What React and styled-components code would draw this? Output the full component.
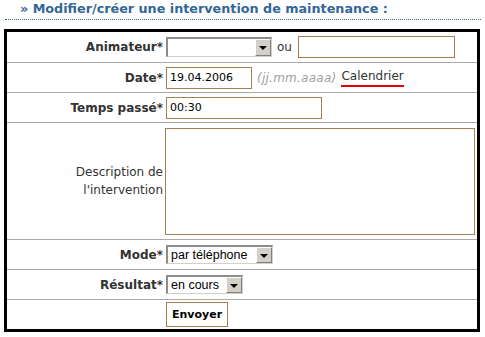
import React from 'react';
import styled, { createGlobalStyle } from 'styled-components';

const GlobalStyle = createGlobalStyle`
  html, body {
    margin: 0;
    padding: 0;
    background: #fff;
  }
  body {
    font-family: "DejaVu Sans", Verdana, sans-serif;
    color: #333;
  }
`;

const Page = styled.div`
  width: 485px;
  height: 337px;
  padding: 0 4px 0 4px;
  box-sizing: border-box;
`;

const Title = styled.h2`
  margin: 0 0 0 1px;
  padding: 2px 0 3px 15px;
  font-size: 12.75px;
  line-height: 14px;
  font-weight: bold;
  color: #336699;
  border-bottom: 1px dotted #336699;
`;

const Form = styled.form`
  margin-top: 9px;
  width: 476px;
  box-sizing: border-box;
  border: 3px solid #000;
`;

const Row = styled.div`
  display: grid;
  grid-template-columns: 159px 1fr;
  height: ${(p) => p.$h}px;
  border-bottom: ${(p) => (p.$last ? 'none' : '1px solid #aaa')};
`;

const Label = styled.label`
  display: flex;
  align-items: center;
  justify-content: flex-end;
  padding-right: 3px;
  font-size: 12px;
  font-weight: ${(p) => (p.$plain ? 'normal' : 'bold')};
  line-height: 18px;
  text-align: right;
  color: #333;
`;

const Field = styled.div`
  display: flex;
  align-items: center;
  font-size: 12px;
  color: #333;
`;

const TextInput = styled.input`
  box-sizing: border-box;
  width: ${(p) => p.$w}px;
  height: 22px;
  margin: 0;
  padding: 0 3px;
  border: 1px solid #a58052;
  background: #fff;
  font-family: "DejaVu Sans", Verdana, sans-serif;
  font-size: 11px;
  color: #000;
  outline: none;
`;

const TextArea = styled.textarea`
  box-sizing: border-box;
  width: 310px;
  height: 107px;
  margin: 0 0 0 -1px;
  border: 1px solid #a58052;
  resize: none;
  outline: none;
`;

const SelectWrap = styled.span`
  display: inline-flex;
  align-items: stretch;
  box-sizing: border-box;
  width: ${(p) => p.$w}px;
  height: ${(p) => p.$h || 19}px;
  border-style: solid;
  border-width: 2px 1px 1px 2px;
  border-color: #8c8c8c #d4d0c8 #d4d0c8 #8c8c8c;
  background: #fff;
`;

const NativeSelect = styled.select`
  flex: 1;
  min-width: 0;
  appearance: none;
  border: 0;
  margin: 0;
  padding: 0 0 0 3px;
  background: transparent;
  font-family: "Liberation Sans", Arial, sans-serif;
  font-size: 12.5px;
  color: #000;
  outline: none;
`;

const ArrowButton = styled.span`
  display: flex;
  align-items: center;
  justify-content: center;
  box-sizing: border-box;
  width: 16px;
  background: #d4d0c8;
  border-style: solid;
  border-width: 1px;
  border-color: #fff #808080 #808080 #fff;

  &::after {
    content: '';
    width: 0;
    height: 0;
    border-left: 4px solid transparent;
    border-right: 4px solid transparent;
    border-top: 4px solid #000;
    margin-top: 1px;
  }
`;

const Or = styled.span`
  margin: 0 6px 0 5px;
  font-size: 12px;
  color: #333;
`;

const Hint = styled.span`
  margin-left: 5px;
  font-style: italic;
  font-size: 12px;
  letter-spacing: 0.25px;
  color: #a0a0a0;
`;

const CalendarLink = styled.a`
  margin-left: 5px;
  padding-bottom: 2px;
  font-size: 12px;
  color: #333;
  text-decoration: none;
  border-bottom: 2px solid #e00000;
  line-height: 14px;
`;

const SubmitButton = styled.button`
  box-sizing: border-box;
  width: 62px;
  height: 25px;
  margin: 0;
  padding: 0;
  border: 1px solid #a58052;
  background: #fff;
  font-family: "DejaVu Sans", Verdana, sans-serif;
  font-size: 11px;
  font-weight: bold;
  color: #000;
`;

function Select({ width, height, value, options }) {
  return (
    <SelectWrap $w={width} $h={height}>
      <NativeSelect defaultValue={value}>
        {options.map((o) => (
          <option key={o} value={o}>{o}</option>
        ))}
      </NativeSelect>
      <ArrowButton />
    </SelectWrap>
  );
}

export default function App() {
  return (
    <Page>
      <GlobalStyle />
      <Title>» Modifier/créer une intervention de maintenance :</Title>
      <Form onSubmit={(e) => e.preventDefault()}>
        <Row $h={30}>
          <Label>Animateur*</Label>
          <Field>
            <Select width={106} height={20} value="" options={['']} />
            <Or>ou</Or>
            <TextInput $w={157} />
          </Field>
        </Row>
        <Row $h={29}>
          <Label>Date*</Label>
          <Field>
            <TextInput $w={86} defaultValue="19.04.2006" />
            <Hint>(jj.mm.aaaa)</Hint>
            <CalendarLink href="#">Calendrier</CalendarLink>
          </Field>
        </Row>
        <Row $h={29}>
          <Label>Temps passé*</Label>
          <Field>
            <TextInput $w={156} defaultValue="00:30" />
          </Field>
        </Row>
        <Row $h={116}>
          <Label $plain>Description de<br />l'intervention</Label>
          <Field>
            <TextArea />
          </Field>
        </Row>
        <Row $h={29}>
          <Label>Mode*</Label>
          <Field>
            <Select width={107} value="par téléphone" options={['par téléphone', 'sur place', 'par e-mail']} />
          </Field>
        </Row>
        <Row $h={29}>
          <Label>Résultat*</Label>
          <Field>
            <Select width={77} value="en cours" options={['en cours', 'terminé']} />
          </Field>
        </Row>
        <Row $h={29} $last>
          <Label />
          <Field>
            <SubmitButton type="submit">Envoyer</SubmitButton>
          </Field>
        </Row>
      </Form>
    </Page>
  );
}
